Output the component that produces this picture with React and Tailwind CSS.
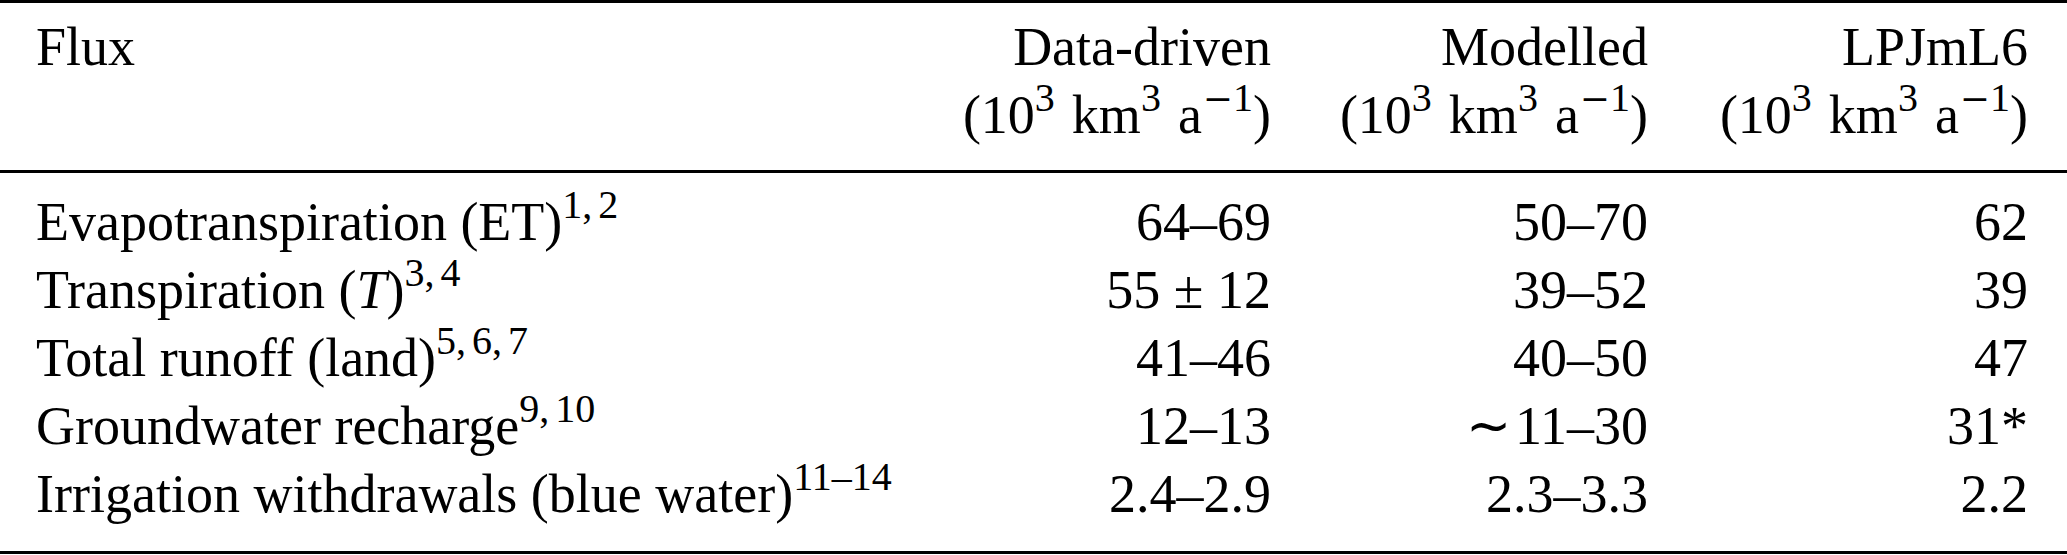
import React from "react";

const Sup = ({ children }) => (
  <sup className="relative top-[-22px] text-[40px] leading-none align-baseline">{children}</sup>
);

const Refs = ({ items }) => (
  <Sup>
    {items.map((it, i) => (
      <React.Fragment key={i}>
        {i > 0 && <span className="mr-[6px]">,</span>}
        {it}
      </React.Fragment>
    ))}
  </Sup>
);

const Unit = () => (
  <span className="whitespace-nowrap">
    (10<Sup>3</Sup>
    <span className="ml-[17px]">km</span>
    <Sup>3</Sup>
    <span className="ml-[17px]">a</span>
    <Sup>
      <span className="font-['DejaVu_Serif'] text-[36px] ml-[1px]">−</span>1
    </Sup>
    )
  </span>
);

const rows = [
  { label: <>Evapotranspiration (ET)<Refs items={["1", "2"]} /></>, d: "64–69", m: "50–70", l: "62" },
  { label: <>Transpiration (<i>T</i>)<Refs items={["3", "4"]} /></>, d: "55 ± 12", m: "39–52", l: "39" },
  { label: <>Total runoff (land)<Refs items={["5", "6", "7"]} /></>, d: "41–46", m: "40–50", l: "47" },
  { label: <>Groundwater recharge<Refs items={["9", "10"]} /></>, d: "12–13", m: <><span className="mr-[4px]">∼</span>11–30</>, l: "31*" },
  { label: <>Irrigation withdrawals (blue water)<Sup>11–14</Sup></>, d: "2.4–2.9", m: "2.3–3.3", l: "2.2" },
];

export default function App() {
  return (
    <div
      className="w-[2067px] h-[555px] bg-white text-black text-[54px] leading-[68px]"
      style={{ fontFamily: '"Liberation Serif", "Times New Roman", serif' }}
    >
      <div className="grid grid-cols-[928px_380px_377px_382px] border-t-[3px] border-b-[3px] border-black pt-[10px] pb-[21px] whitespace-nowrap">
        <div className="pl-[36px]">Flux</div>
        <div className="text-right pr-[37px] flex flex-col">
          <span>Data-driven</span>
          <Unit />
        </div>
        <div className="text-right pr-[37px] flex flex-col">
          <span>Modelled</span>
          <Unit />
        </div>
        <div className="text-right pr-[39px] flex flex-col">
          <span>LPJmL6</span>
          <Unit />
        </div>
      </div>
      <div className="grid grid-cols-[928px_380px_377px_382px] border-b-[3px] border-black pt-[15px] pb-[23px] whitespace-nowrap">
        {rows.map((r, i) => (
          <React.Fragment key={i}>
            <div className="pl-[36px]">{r.label}</div>
            <div className="text-right pr-[37px]">{r.d}</div>
            <div className="text-right pr-[37px]">{r.m}</div>
            <div className="text-right pr-[39px]">{r.l}</div>
          </React.Fragment>
        ))}
      </div>
    </div>
  );
}
